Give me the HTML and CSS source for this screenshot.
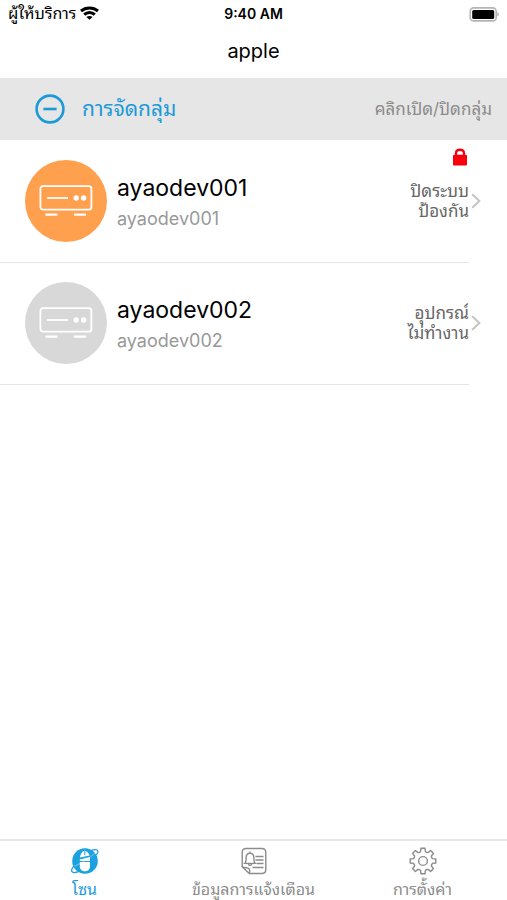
FILE: index.html
```html
<!DOCTYPE html>
<html lang="th">
<head>
  <meta charset="UTF-8" />
  <meta name="viewport" content="width=device-width, initial-scale=1.0" />
  <title>apple</title>
  <link rel="stylesheet" href="styles.css">
</head>
<body>
  <div class="status-bar">
    <div class="carrier">
      <span>ผู้ให้บริการ</span>
      <svg width="19" height="14" viewBox="0 0 19 14" fill="none" stroke="#000" stroke-width="3">
        <path d="M1 5C5.800.9 13.200.9 18 5" />
        <path d="M4.200 8.700c3-2.800 7.600-2.800 10.600 0" />
        <path d="M9.500 13.800L6.400 11c1.800-1.500 4.400-1.500 6.200 0z" fill="#000" stroke="none" />
      </svg>
    </div>
    <div class="time">9:40 AM</div>
    <div class="battery">
      <svg width="30" height="15" viewBox="0 0 30 15">
        <rect x="1.2" y="0.9" width="26" height="13" rx="3.5" fill="#fff" stroke="#b4b4b4" stroke-width="1.6" />
        <rect x="3.2" y="2.9" width="22" height="9" rx="1.5" fill="#000" />
        <path d="M28.4 5.2c1.8.8 1.8 3.4 0 4.2z" fill="#a6a6a6" />
      </svg>
    </div>
  </div>

  <header class="title-bar">
    <h1>apple</h1>
  </header>

  <div class="group-bar">
    <button class="group-toggle">
      <svg width="30" height="30" viewBox="0 0 30 30" fill="none" stroke="#1b9ad8" stroke-width="2.6">
        <circle cx="15" cy="15" r="13.4" />
        <path d="M8.4 15h13.2" />
      </svg>
      <span>การจัดกลุ่ม</span>
    </button>
    <button class="group-action">คลิกเปิด/ปิดกลุ่ม</button>
  </div>

  <main class="devices">
    <a class="device" href="#">
      <span class="device-icon online">
        <svg width="54" height="32" viewBox="0 0 54 32" fill="none" stroke="#fff" stroke-width="1.8">
          <rect x="1.4" y="1.2" width="51" height="23.4" rx="2.6" />
          <path d="M8 13h21" />
          <path d="M6.5 29.6h12M35 29.6h12" stroke-width="2.4" />
          <circle cx="37.2" cy="13" r="2.7" fill="#fff" stroke="none" />
          <circle cx="44.6" cy="13" r="2.7" fill="#fff" stroke="none" />
        </svg>
      </span>
      <span class="device-text">
        <span class="device-name">ayaodev001</span>
        <span class="device-id">ayaodev001</span>
      </span>
      <svg class="lock" width="16" height="18" viewBox="0 0 16 18">
        <path d="M4 8.5V5.4Q4 1.8 8 1.8t4 3.6v3.1" fill="none" stroke="#f8000f" stroke-width="2.4" />
        <rect x="1" y="6.8" width="14" height="10.6" rx="1" fill="#f8000f" />
      </svg>
      <span class="device-state">ปิดระบบ<br>ป้องกัน</span>
      <svg class="chevron" width="10" height="16" viewBox="0 0 10 16" fill="none" stroke="#c4c4c4" stroke-width="2">
        <path d="M1.2 1.2L8.4 8l-7.2 6.8" />
      </svg>
    </a>

    <a class="device" href="#">
      <span class="device-icon offline">
        <svg width="54" height="32" viewBox="0 0 54 32" fill="none" stroke="#fff" stroke-width="1.8">
          <rect x="1.4" y="1.2" width="51" height="23.4" rx="2.6" />
          <path d="M8 13h21" />
          <path d="M6.5 29.6h12M35 29.6h12" stroke-width="2.4" />
          <circle cx="37.2" cy="13" r="2.7" fill="#fff" stroke="none" />
          <circle cx="44.6" cy="13" r="2.7" fill="#fff" stroke="none" />
        </svg>
      </span>
      <span class="device-text">
        <span class="device-name">ayaodev002</span>
        <span class="device-id">ayaodev002</span>
      </span>
      <span class="device-state">อุปกรณ์<br>ไม่ทำงาน</span>
      <svg class="chevron" width="10" height="16" viewBox="0 0 10 16" fill="none" stroke="#c4c4c4" stroke-width="2">
        <path d="M1.2 1.2L8.4 8l-7.2 6.8" />
      </svg>
    </a>
  </main>

  <nav class="tab-bar">
    <a class="tab active" href="#">
      <svg width="28" height="28" viewBox="0 0 28 28" fill="none">
        <circle cx="14" cy="14" r="12.8" fill="#1ba0e0" />
        <path d="M13.4 3.4c-2.800 1.600-4.200 4-4.400 7.200l9.600-2.200c-.8-2.400-2.600-4.200-5.200-5z" fill="#fff" />
        <path d="M8.800 12.400l10.200-2.400v4H8.800z" fill="#fff" />
        <path d="M8.800 15h10.200v4.200c0 3-2.200 5-5.100 5s-5.100-2-5.100-5z" fill="#fff" />
        <path d="M13.800 3.400v4.600" stroke="#1ba0e0" stroke-width="1" />
        <path d="M2.600 19.400C8 17.800 19 11 25 5.200" stroke="#fff" stroke-width=".8" opacity=".5" />
        <path d="M19.500 3.800c3.600-1.600 7-1.400 7.400.4.300 1.400-.4 2.400-1.600 3.800" stroke="#1ba0e0" stroke-width="1.300" />
        <path d="M3 18.800c-2.200 2.600-2.800 5-1.800 6 1.200 1.100 3.800.8 6.600-.4" stroke="#1ba0e0" stroke-width="1.300" />
      </svg>
      <span>โซน</span>
    </a>
    <a class="tab" href="#">
      <svg width="28" height="28" viewBox="0 0 28 28" fill="none" stroke="#8c8c8c" stroke-width="1.4">
        <path d="M2.2 20V5.500q0-4 4-4h15.600q4 0 4 4v17q0 4-4 4H9.500" />
        <path d="M2.200 19.800l7 6.800c.8-2.400.6-4-.2-5-1.400-1-3.200-.6-6.800-1.800z" stroke-linejoin="round" />
        <path d="M4.800 16.400c1.500-1.400 1.300-3 1.300-5.400 0-2.800 1.600-4.800 3.900-4.800s3.900 2 3.900 4.800c0 2.400-.2 4 1.300 5.400zM10 6.200V4.400M8.200 16.600c.2 2.400 3.400 2.400 3.600 0" />
        <path d="M15.500 9.500h8M15.500 13h8M16.500 16.500h7M12.500 20.500h11" />
      </svg>
      <span>ข้อมูลการแจ้งเตือน</span>
    </a>
    <a class="tab" href="#">
      <svg width="28" height="28" viewBox="-14 -14 28 28" fill="none" stroke="#8c8c8c" stroke-width="1.4" stroke-linejoin="round">
        <path d="M9.500-2.400L12.800-2V2L9.500 2.400Q8.300 3.400 8.400 5L10.500 7.600 7.600 10.500 5 8.400Q3.400 8.300 2.400 9.500L2 12.800H-2L-2.400 9.500Q-3.400 8.300-5 8.400L-7.600 10.500-10.500 7.600-8.400 5Q-8.300 3.400-9.500 2.400L-12.800 2V-2L-9.500-2.400Q-8.300-3.400-8.400-5L-10.500-7.600-7.600-10.500-5-8.400Q-3.400-8.300-2.400-9.500L-2-12.800H2L2.400-9.500Q3.400-8.300 5-8.400L7.600-10.500 10.500-7.600 8.400-5Q8.300-3.400 9.500-2.400z" />
        <circle cx="0" cy="0" r="4.4" />
      </svg>
      <span>การตั้งค่า</span>
    </a>
  </nav>
</body>
</html>
```
FILE: styles.css
```css
* {
  box-sizing: border-box;
}

body {
  font-family: Inter, Thonburi, "Noto Sans Thai Looped", Loma, Waree, Garuda, sans-serif;
  background: #fff;
  color: #000;
  display: flex;
  flex-direction: column;
  min-height: 100vh;
  margin: 0;
}

svg {
  display: block;
  flex-shrink: 0;
}

a {
  color: inherit;
  text-decoration: none;
}

button {
  font-family: inherit;
  background: none;
  border: none;
  padding: 0;
  cursor: pointer;
}

.status-bar {
  display: grid;
  grid-template-columns: 1fr auto 1fr;
  align-items: center;
  height: 28px;
  padding: 0 8px;
  font-size: 14px;
  line-height: 20px;
}

.carrier {
  display: flex;
  align-items: center;
  gap: 4px;
  padding-bottom: 2px;
  font-size: 16px;
}

.time {
  font-weight: 600;
}

.battery {
  display: flex;
  justify-content: flex-end;
}

.title-bar {
  display: flex;
  align-items: center;
  justify-content: center;
  height: 50px;
  padding-bottom: 4px;
}

.title-bar h1 {
  margin: 0;
  font-size: 20px;
  font-weight: 400;
}

.group-bar {
  display: flex;
  align-items: center;
  justify-content: space-between;
  height: 62px;
  padding: 0 15px 0 35px;
  background: #e6e6e6;
}

.group-toggle {
  display: flex;
  align-items: center;
  gap: 17px;
  color: #1b9ad8;
  font-size: 21px;
  line-height: 24px;
}

.group-action {
  color: #8c8c8c;
  font-size: 17px;
  line-height: 20px;
}

.devices {
  flex: 1;
}

.device {
  position: relative;
  display: flex;
  align-items: center;
  height: 122px;
  padding: 0 26px 0 25px;
}

/* divider stops short of the chevron */
.device::after {
  content: "";
  position: absolute;
  left: 0;
  right: 38px;
  bottom: -1px;
  height: 1px;
  background: #e4e4e4;
}

.device-icon {
  display: flex;
  align-items: center;
  justify-content: center;
  width: 82px;
  height: 82px;
  border-radius: 50%;
}

.online {
  background: #ffa04f;
}

.offline {
  background: #d8d8d8;
}

.device-text {
  display: flex;
  flex: 1;
  flex-direction: column;
  gap: 4px;
  padding: 2px 0 0 10px;
}

.device-name {
  font-size: 23px;
  line-height: 30px;
}

.device-id {
  color: #999;
  font-size: 18px;
  line-height: 24px;
}

.device-state {
  color: #666;
  font-size: 17px;
  line-height: 20px;
  text-align: right;
}

.chevron {
  margin-left: 2px;
}

.lock {
  position: absolute;
  top: 8px;
  right: 39px;
}

.tab-bar {
  display: grid;
  grid-template-columns: repeat(3, 1fr);
  height: 61px;
  border-top: 2px solid #e8e8e8;
}

.tab {
  display: flex;
  flex-direction: column;
  align-items: center;
  gap: 4px;
  padding-top: 6px;
  color: #8c8c8c;
  font-size: 16px;
  line-height: 20px;
}

.active {
  color: #1b9ad8;
}
```
